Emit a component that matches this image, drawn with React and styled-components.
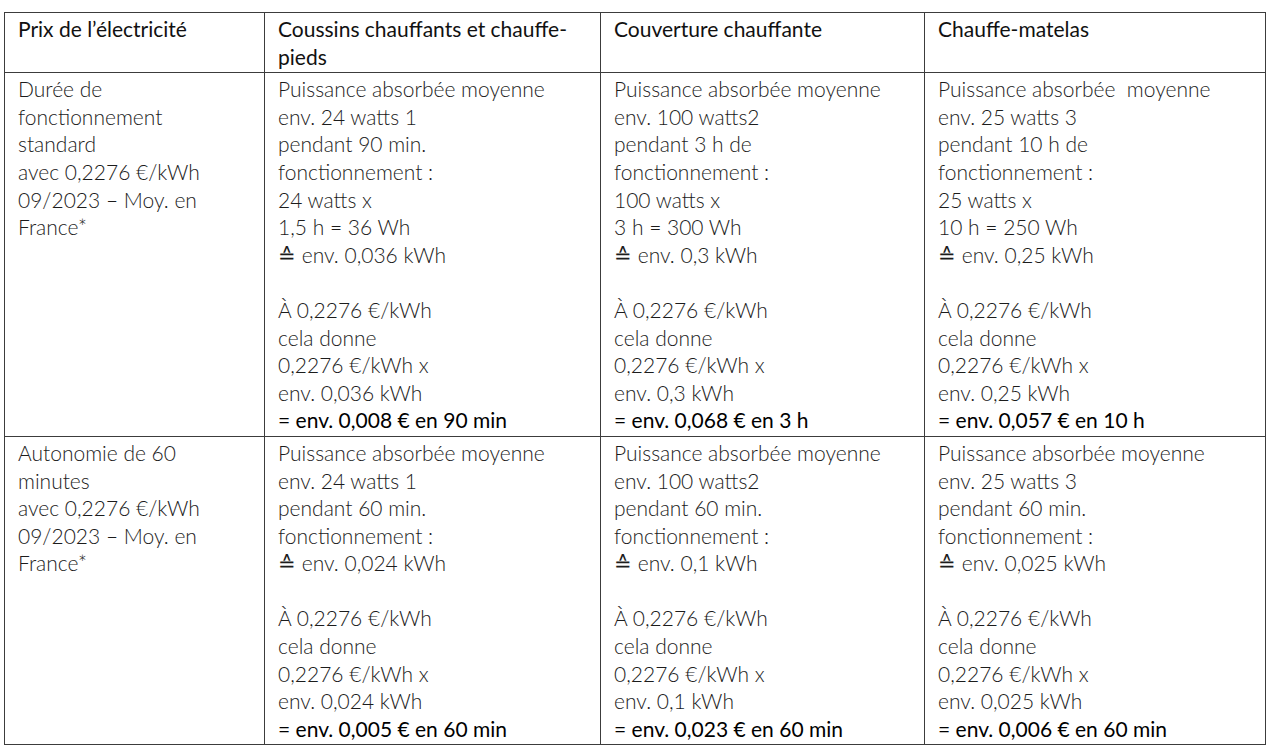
import React from 'react';
import styled, { createGlobalStyle } from 'styled-components';

const GlobalStyle = createGlobalStyle`
	body {
		margin: 0;
		background: #fff;
		font-family: Lato, "Open Sans", sans-serif;
		color: #1c1c1c;
	}
`;

const Page = styled.div`
	padding: 12px 0 0 4px;
`;

const Table = styled.table`
	width: 1261px;
	table-layout: fixed;
	border-collapse: collapse;
	border: 1px solid #3c3c3c;
`;

const Col = styled.col`
	width: ${(p) => p.$w}px;
`;

const Cell = styled.td`
	border: 1px solid #3c3c3c;
	vertical-align: top;
	padding: 2px 8px 2px 13px;
	font-size: 21px;
	line-height: 27.6px;
	font-weight: ${(p) => (p.$head ? 400 : 300)};
	color: ${(p) => (p.$head ? '#111' : '#1c1c1c')};
`;

const Line = styled.div`
	white-space: pre;
	min-height: 27.6px;
	font-weight: ${(p) => (p.$strong ? 400 : 'inherit')};
	color: ${(p) => (p.$strong ? '#000' : 'inherit')};
`;

const header = [
	['Prix de l’électricité'],
	['Coussins chauffants et chauffe-', 'pieds'],
	['Couverture chauffante'],
	['Chauffe-matelas'],
];

const rows = [
	[
		['Durée de', 'fonctionnement', 'standard', 'avec 0,2276 €/kWh', '09/2023 – Moy. en', 'France*'],
		[
			'Puissance absorbée moyenne',
			'env. 24 watts 1',
			'pendant 90 min.',
			'fonctionnement :',
			'24 watts x',
			'1,5 h = 36 Wh',
			'≙ env. 0,036 kWh',
			'',
			'À 0,2276 €/kWh',
			'cela donne',
			'0,2276 €/kWh x',
			'env. 0,036 kWh',
			'!= env. 0,008 € en 90 min',
		],
		[
			'Puissance absorbée moyenne',
			'env. 100 watts2',
			'pendant 3 h de',
			'fonctionnement :',
			'100 watts x',
			'3 h = 300 Wh',
			'≙ env. 0,3 kWh',
			'',
			'À 0,2276 €/kWh',
			'cela donne',
			'0,2276 €/kWh x',
			'env. 0,3 kWh',
			'!= env. 0,068 € en 3 h',
		],
		[
			'Puissance absorbée  moyenne',
			'env. 25 watts 3',
			'pendant 10 h de',
			'fonctionnement :',
			'25 watts x',
			'10 h = 250 Wh',
			'≙ env. 0,25 kWh',
			'',
			'À 0,2276 €/kWh',
			'cela donne',
			'0,2276 €/kWh x',
			'env. 0,25 kWh',
			'!= env. 0,057 € en 10 h',
		],
	],
	[
		['Autonomie de 60', 'minutes', 'avec 0,2276 €/kWh', '09/2023 – Moy. en', 'France*'],
		[
			'Puissance absorbée moyenne',
			'env. 24 watts 1',
			'pendant 60 min.',
			'fonctionnement :',
			'≙ env. 0,024 kWh',
			'',
			'À 0,2276 €/kWh',
			'cela donne',
			'0,2276 €/kWh x',
			'env. 0,024 kWh',
			'!= env. 0,005 € en 60 min',
		],
		[
			'Puissance absorbée moyenne',
			'env. 100 watts2',
			'pendant 60 min.',
			'fonctionnement :',
			'≙ env. 0,1 kWh',
			'',
			'À 0,2276 €/kWh',
			'cela donne',
			'0,2276 €/kWh x',
			'env. 0,1 kWh',
			'!= env. 0,023 € en 60 min',
		],
		[
			'Puissance absorbée moyenne',
			'env. 25 watts 3',
			'pendant 60 min.',
			'fonctionnement :',
			'≙ env. 0,025 kWh',
			'',
			'À 0,2276 €/kWh',
			'cela donne',
			'0,2276 €/kWh x',
			'env. 0,025 kWh',
			'!= env. 0,006 € en 60 min',
		],
	],
];

// lines starting with "!" are the result lines, in the heavier weight
const Lines = ({ lines }) =>
	lines.map((text, i) =>
		text.startsWith('!') ? (
			<Line key={i} $strong>
				{text.slice(1)}
			</Line>
		) : (
			<Line key={i}>{text}</Line>
		)
	);

export default function App() {
	return (
		<Page>
			<GlobalStyle />
			<Table>
				<colgroup>
					<Col $w={260} />
					<Col $w={336} />
					<Col $w={324} />
					<Col $w={341} />
				</colgroup>
				<thead>
					<tr>
						{header.map((lines, i) => (
							<Cell as="th" key={i} $head style={{ textAlign: 'left' }}>
								<Lines lines={lines} />
							</Cell>
						))}
					</tr>
				</thead>
				<tbody>
					{rows.map((row, r) => (
						<tr key={r}>
							{row.map((lines, c) => (
								<Cell key={c}>
									<Lines lines={lines} />
								</Cell>
							))}
						</tr>
					))}
				</tbody>
			</Table>
		</Page>
	);
}
